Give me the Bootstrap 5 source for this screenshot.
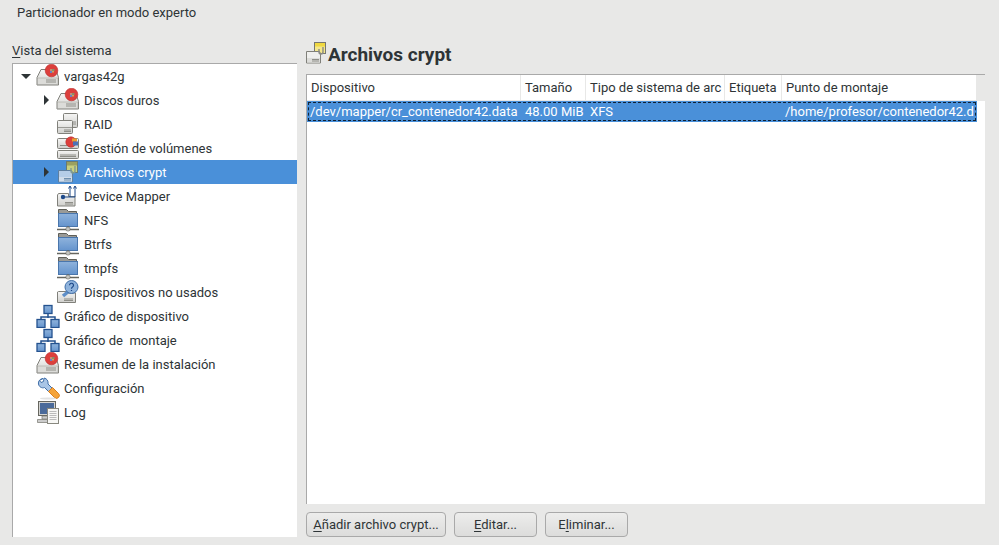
<!DOCTYPE html>
<html lang="en">
<head>
<meta charset="UTF-8">
<title>Particionador en modo experto</title>
<link href="https://cdn.jsdelivr.net/npm/bootstrap@5.3.0/dist/css/bootstrap.min.css" rel="stylesheet">
<style>
html, body { height: 545px; overflow: hidden; }
body { background: #e8e8e7; color: #2e3436; font: 13px/16px Roboto, "Liberation Sans", sans-serif; }
.app-title { padding: 5px 17px 0; height: 42px; }
.app-main { height: 503px; padding-left: 12px; }
.side-col { width: 285px; margin-right: 7px; }
.side-label { height: 16px; padding-top: 1px; }
.tree-box { height: 474px; margin-top: 5px; background: #fff; border-top: 1px solid #a9a9a9; border-left: 1px solid #a9a9a9; }
.tree-row { height: 24px; color: #2e3436; white-space: pre; }
.tree-row.on { background: #4a90d9; color: #fff; }
.tree-txt { padding-top: 2px; }
.tw-down { width: 0; height: 0; border-left: 5px solid transparent; border-right: 5px solid transparent; border-top: 5px solid #2e3436; }
.tw-right { width: 0; height: 0; margin-left: 3px; border-top: 5px solid transparent; border-bottom: 5px solid transparent; border-left: 5px solid #2e3436; }
.lvl0 { padding-left: 8px; }
.lvl1 { padding-left: 28px; }
.tw-slot { width: 15px; flex: none; }
.tree-ico { width: 24px; height: 24px; flex: none; margin-right: 4px; }
.main-col { width: 681px; }
.page-head { height: 33px; margin-top: -1px; }
.page-head h1 { font: 700 19px/22px Roboto, "Liberation Sans", sans-serif; margin: 3px 0 0 0; color: #2e3436; }
.page-head svg { width: 24px; height: 24px; flex: none; }
.vol-box { margin-left: 2px; height: 430px; width: 679px; background: #fff; border-top: 1px solid #a9a9a9; border-left: 1px solid #a9a9a9; }
.vol-tbl { table-layout: fixed; border-collapse: separate; border-spacing: 0; width: 670px; }
.vol-tbl th { font-weight: 400; height: 26px; padding: 1px 4px 0; border-right: 1px solid #e8e8e7; border-bottom: 1px solid #e8e8e7; white-space: nowrap; overflow: hidden; }
.vol-tbl td { height: 21px; padding: 0 3px; white-space: nowrap; overflow: hidden; background: #4a90d9; color: #fff; }
.vol-tbl td:nth-child(2), .vol-tbl td:nth-child(3) { padding-left: 4px; }
.vol-tbl tbody tr { outline: 1px dashed #123; outline-offset: -2px; }
.head-gap { width: 8px; height: 26px; background: #e8e8e7; }
.btn-bar { gap: 8px; margin: 8px 0 0 2px; }
.gtk-btn { height: 25px; padding: 0; font-size: 13px; line-height: 23px; color: #2e3436; border: 1px solid #a9a9a9; border-radius: 4px; background: linear-gradient(#ededec, #dcdcdb); }
.gtk-btn:hover { color: #2e3436; }
.b-add { width: 140px; }
.b-edit { width: 83px; }
.b-del { width: 83px; }
u { text-underline-offset: 2px; }
</style>
</head>
<body>
<svg width="0" height="0" class="position-absolute">
  <defs>
    <linearGradient id="disk" x1="0" y1="0" x2="0" y2="1"><stop offset="0" stop-color="#f6f6f5"/><stop offset="1" stop-color="#cfcfcc"/></linearGradient>
    <linearGradient id="fold" x1="0" y1="0" x2="0" y2="1"><stop offset="0" stop-color="#8fb3dc"/><stop offset="1" stop-color="#6594cd"/></linearGradient>
    <symbol id="i-hd" viewBox="0 0 24 24">
      <path d="M5 5.500h15l2.500 8v7.500h-21.500v-7.500z" fill="url(#disk)" stroke="#80807a"/>
      <rect x="1.500" y="14" width="20.500" height="6.500" fill="#dcdcd9" stroke="#9a9a95" stroke-width=".5"/>
      <path d="M10 16h10M10 18h10" stroke="#8e8e88"/>
      <circle cx="15.500" cy="6.500" r="6.300" fill="#dc3f3c" stroke="#bb2a2a" stroke-width=".6"/>
      <path d="M14 5h2v2h-2z" fill="#c98a70"/>
      <path d="M16 5h2.500v2H16z" fill="#8a8f6a"/>
      <path d="M14 7h2v2h-2z" fill="#6a80c4"/>
      <path d="M16 7h2v1.500h-2z" fill="#c9a860"/>
    </symbol>
    <symbol id="i-raid" viewBox="0 0 24 24">
      <rect x="7.500" y="1.500" width="14" height="14" rx="1" fill="url(#disk)" stroke="#80807a"/>
      <path d="M16 10h4M16 12h4" stroke="#8e8e88"/>
      <rect x="1.500" y="8.500" width="15" height="13" rx="1" fill="url(#disk)" stroke="#80807a"/>
      <path d="M2 15.500h14" stroke="#9a9a95"/>
      <path d="M8 18h7M8 19.500h7" stroke="#8e8e88"/>
    </symbol>
    <symbol id="i-lvm" viewBox="0 0 24 24">
      <rect x="1.500" y="2.500" width="21" height="10" rx="1" fill="url(#disk)" stroke="#80807a"/>
      <rect x="1.500" y="14.500" width="21" height="8" rx="1" fill="url(#disk)" stroke="#80807a"/>
      <path d="M4 9.500h8M4 19h16M4 20.500h16" stroke="#8e8e88"/>
      <circle cx="15" cy="6" r="5.200" fill="#dc3f3c" stroke="#bb2a2a" stroke-width=".6"/>
      <path d="M16 2.500h5v3h-5z" fill="#e8a030"/>
      <path d="M17 5.500h5v4h-5z" fill="#4a72b8"/>
    </symbol>
    <symbol id="i-crypt" viewBox="0 0 24 24">
      <rect x="10.500" y="1.500" width="11" height="11" fill="#c8d080" stroke="#6a7a70"/>
      <rect x="11" y="2" width="10" height="3.500" fill="#9aa060"/>
      <path d="M2.500 10.500h13l1 2v9.500h-14z" fill="#b5cde8" stroke="#5f7f9f"/>
      <rect x="3" y="17" width="13" height="4.500" fill="#cfdceb"/>
      <path d="M8 18.500h7M8 20h7" stroke="#6f8fae"/>
      <path d="M15 8v3a2 2 0 0 0 4 0V6" fill="none" stroke="#7f9a90" stroke-width="1.400"/>
    </symbol>
    <symbol id="i-crypt-d" viewBox="0 0 24 24">
      <rect x="10.500" y="1.500" width="11" height="11" fill="#f5e88a" stroke="#77776f"/>
      <rect x="11" y="2" width="10" height="3.500" fill="#f0d840"/>
      <path d="M2.500 10.500h13l1 2v9.500h-14z" fill="#efefed" stroke="#80807a"/>
      <rect x="3" y="17" width="13" height="4.500" fill="#dcdcd9"/>
      <path d="M8 18.500h7M8 20h7" stroke="#8e8e88"/>
      <path d="M15 8v3a2 2 0 0 0 4 0V6" fill="none" stroke="#8a8a85" stroke-width="1.400"/>
    </symbol>
    <symbol id="i-dm" viewBox="0 0 24 24">
      <path d="M2.500 9.500h10v3h6.500v9.500H1.500V11z" fill="url(#disk)" stroke="#80807a"/>
      <path d="M9 18.500h8M9 20h8" stroke="#8e8e88"/>
      <circle cx="7" cy="13" r="2.200" fill="#1f4a8a"/>
      <path d="M7 13h12v-4M14 13V2.500M12.500 4.500l1.500-2.500 1.500 2.500M19 9V2.500M17.500 4.500L19 2l1.500 2.500" fill="none" stroke="#1f4a8a"/>
    </symbol>
    <symbol id="i-net" viewBox="0 0 24 24">
      <path d="M2.500 1.500h8l2 2h8v15h-18z" fill="#9a9a96" stroke="#5f5f58"/>
      <rect x="2.500" y="5.500" width="19" height="13" fill="url(#fold)" stroke="#4a76ac"/>
      <path d="M1 21.500h22" stroke="#66665f" stroke-width="1.500"/>
      <path d="M12 18.500v3" stroke="#66665f" stroke-width="2"/>
      <rect x="10" y="19" width="4" height="4" rx="1.500" fill="#c4c4c0" stroke="#66665f" stroke-width=".6"/>
    </symbol>
    <symbol id="i-unused" viewBox="0 0 24 24">
      <path d="M2.500 11.500h8l2 1.500h7v9.500H1.500V12z" fill="url(#disk)" stroke="#80807a"/>
      <path d="M8 19h9M8 20.500h9" stroke="#8e8e88"/>
      <path d="M7 16l6-5" stroke="#5f8fc8" stroke-width="3.500"/>
      <circle cx="15.500" cy="7" r="6.500" fill="#8fb3dc" stroke="#3f6ea8"/>
      <path d="M13.500 5.200a2 2 0 1 1 3 1.800c-.8.500-1 .8-1 1.700M15.500 10v1" fill="none" stroke="#1f4a8a" stroke-width="1.200"/>
    </symbol>
    <symbol id="i-graph" viewBox="0 0 24 24">
      <path d="M12 8v6M5 16v-3h14v3" fill="none" stroke="#24528f" stroke-width="1.500"/>
      <rect x="8" y="1.500" width="8" height="8" fill="url(#fold)" stroke="#24528f" stroke-width="1.300"/>
      <rect x="1" y="15.500" width="8" height="8" fill="url(#fold)" stroke="#24528f" stroke-width="1.300"/>
      <rect x="15" y="15.500" width="8" height="8" fill="url(#fold)" stroke="#24528f" stroke-width="1.300"/>
    </symbol>
    <symbol id="i-conf" viewBox="0 0 24 24">
      <path d="M7 2.500c-3 .5-5 2.500-4.500 5.500.5 3 3.500 4.500 6 3.500l5 5 3.500-3.500-5-5c.5-3-1-5.500-4-6l-.5 3.500-2.500 1-1.500-2z" fill="#a9c5e6" stroke="#3f6ea8"/>
      <path d="M12.500 15.500l4-4 6 6a2.800 2.800 0 0 1-4 4z" fill="#f5a43a" stroke="#d9801f"/>
      <ellipse cx="12" cy="22.500" rx="8" ry="1" fill="#e2e2e2"/>
    </symbol>
    <symbol id="i-log" viewBox="0 0 24 24">
      <rect x="2.500" y="1.500" width="17" height="14" fill="#d5d5d2" stroke="#66665f"/>
      <rect x="4" y="3" width="14" height="11" fill="#4a6a9a"/>
      <path d="M6 16h8v3H6zM1.500 19.500h14v3h-14z" fill="#ccc" stroke="#77776f" stroke-width=".7"/>
      <rect x="11.500" y="8.500" width="11" height="15" fill="#f7f7f5" stroke="#88887f"/>
      <path d="M13.500 11.500h7M13.500 13.500h7M13.500 15.500h7M13.500 17.500h7M13.500 19.500h7" stroke="#bbb"/>
    </symbol>
  </defs>
</svg>

<div class="app-title">Particionador en modo experto</div>
<div class="app-main d-flex">
  <div class="side-col">
    <div class="side-label"><u>V</u>ista del sistema</div>
    <div class="tree-box" id="tree"></div>
  </div>
  <div class="main-col">
    <div class="page-head d-flex align-items-start">
      <svg><use href="#i-crypt-d"/></svg>
      <h1>Archivos crypt</h1>
    </div>
    <div class="vol-box d-flex flex-column">
      <div class="d-flex align-items-start">
        <table class="vol-tbl">
          <colgroup>
            <col style="width:214px"><col style="width:65px"><col style="width:139px"><col style="width:57px"><col style="width:195px">
          </colgroup>
          <thead>
            <tr><th>Dispositivo</th><th>Tamaño</th><th>Tipo de sistema de arc</th><th>Etiqueta</th><th>Punto de montaje</th></tr>
          </thead>
          <tbody>
            <tr><td>/dev/mapper/cr_contenedor42.data</td><td>48.00 MiB</td><td>XFS</td><td></td><td>/home/profesor/contenedor42.d</td></tr>
          </tbody>
        </table>
        <div class="head-gap"></div>
      </div>
    </div>
    <div class="btn-bar d-flex">
      <button type="button" class="btn gtk-btn b-add"><u>A</u>ñadir archivo crypt...</button>
      <button type="button" class="btn gtk-btn b-edit"><u>E</u>ditar...</button>
      <button type="button" class="btn gtk-btn b-del">E<u>l</u>iminar...</button>
    </div>
  </div>
</div>

<script>
  const rows = [
    [0, "down", "i-hd", "vargas42g"],
    [1, "right", "i-hd", "Discos duros"],
    [1, "", "i-raid", "RAID"],
    [1, "", "i-lvm", "Gestión de volúmenes"],
    [1, "right", "i-crypt", "Archivos crypt", true],
    [1, "", "i-dm", "Device Mapper"],
    [1, "", "i-net", "NFS"],
    [1, "", "i-net", "Btrfs"],
    [1, "", "i-net", "tmpfs"],
    [1, "", "i-unused", "Dispositivos no usados"],
    [0, "", "i-graph", "Gráfico de dispositivo"],
    [0, "", "i-graph", "Gráfico de  montaje"],
    [0, "", "i-hd", "Resumen de la instalación"],
    [0, "", "i-conf", "Configuración"],
    [0, "", "i-log", "Log"]
  ];
  document.getElementById("tree").innerHTML = rows.map(r => `
    <div class="tree-row d-flex align-items-center lvl${r[0]}${r[4] ? " on" : ""}">
      <span class="tw-slot d-flex align-items-center">${r[1] ? `<span class="tw-${r[1]}"></span>` : ""}</span>
      <svg class="tree-ico"><use href="#${r[2]}"/></svg>
      <span class="tree-txt">${r[3]}</span>
    </div>`).join("");
</script>
<script src="https://cdn.jsdelivr.net/npm/bootstrap@5.3.0/dist/js/bootstrap.bundle.min.js"></script>
</body>
</html>
